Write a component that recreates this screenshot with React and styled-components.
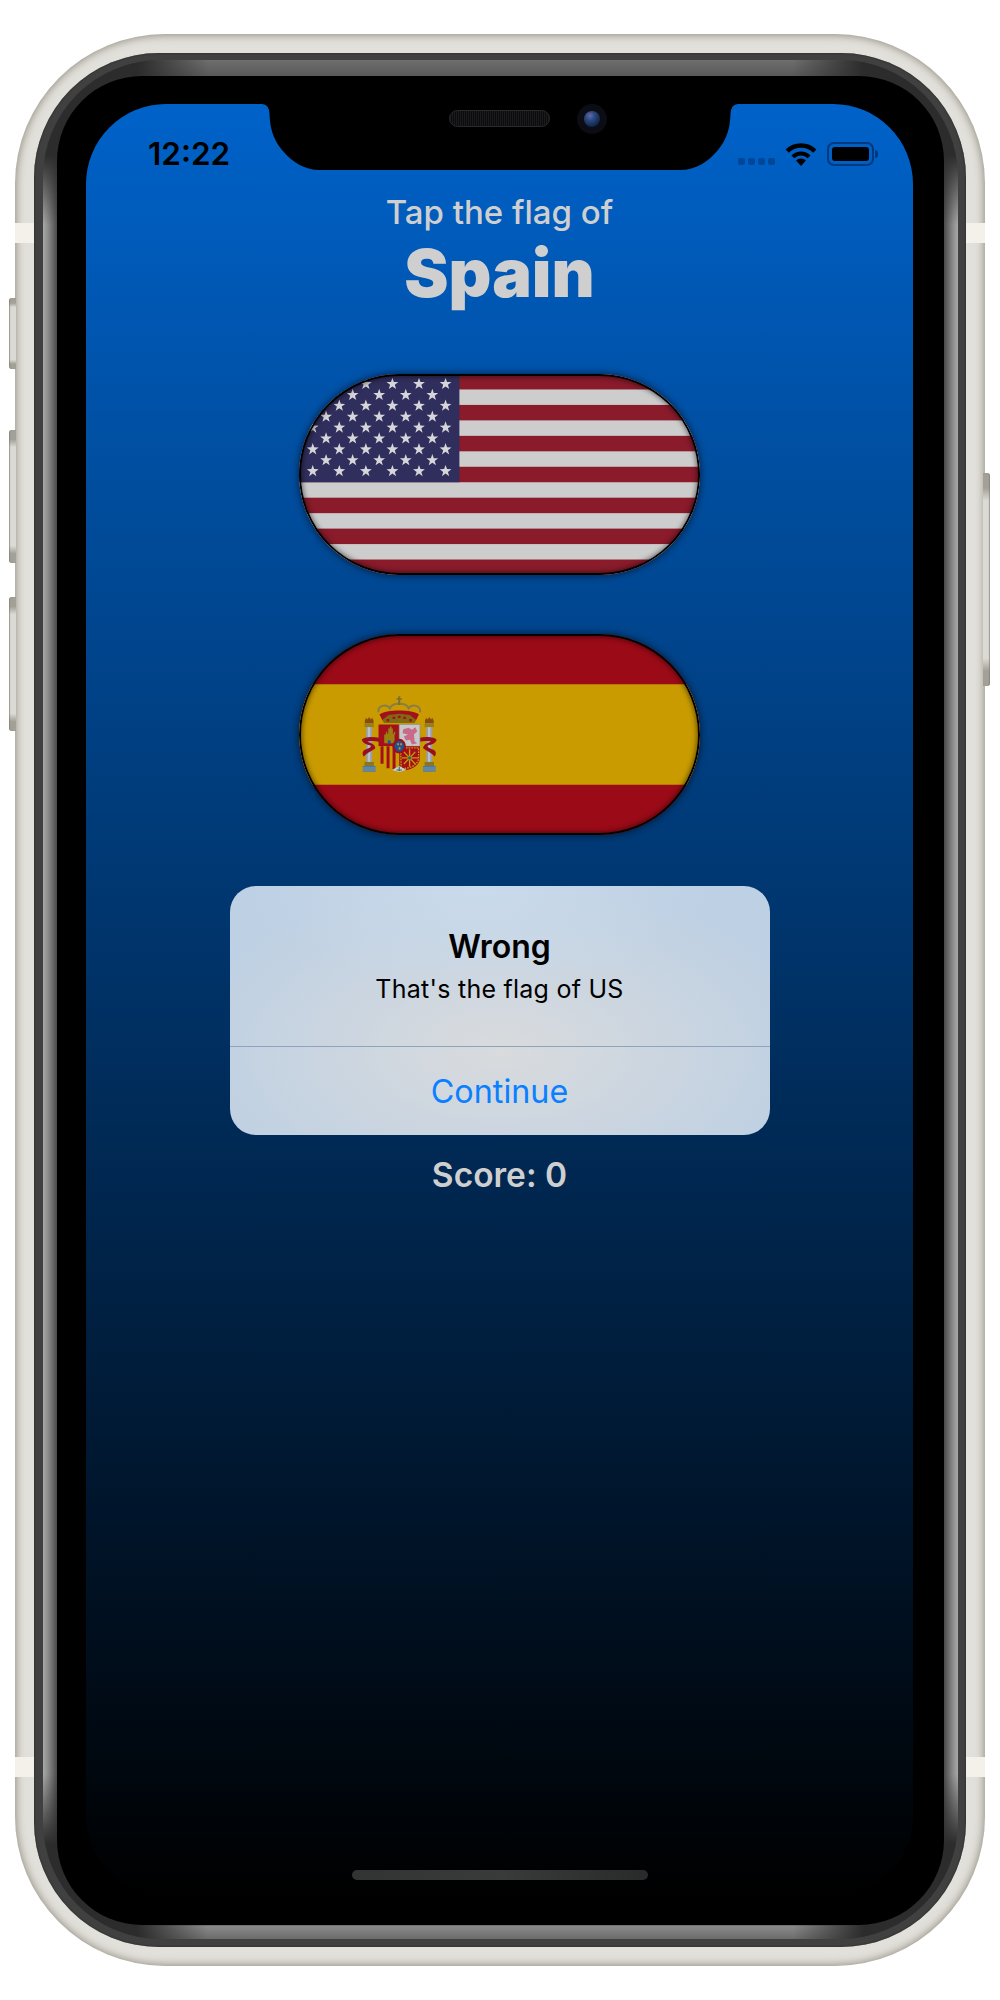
import styled, { createGlobalStyle } from 'styled-components';

const GlobalStyle = createGlobalStyle`
  html, body {
    margin: 0;
    padding: 0;
    background: #fff;
  }
  * {
    box-sizing: border-box;
  }
`;

const Page = styled.div`
  width: 1000px;
  height: 2000px;
  padding: 34px 15px;
  font-family: Inter, "Liberation Sans", sans-serif;
`;

const Phone = styled.div`
  position: relative;
  width: 970px;
  height: 1932px;
  padding: 19px;
  border-radius: 150px;
  background: #e2e0da;
  box-shadow: inset 0 0 9px 1px rgba(125, 120, 108, 0.8);
`;

const SideButton = styled.div`
  position: absolute;
  top: ${({ $top }) => $top}px;
  height: ${({ $height }) => $height}px;
  width: 7px;
  ${({ $right }) => ($right ? 'right: -5px;' : 'left: -6px;')}
  border-radius: ${({ $right }) => ($right ? '0 3px 3px 0' : '3px 0 0 3px')};
  background: linear-gradient(
    #a3a097 0,
    #a3a097 7%,
    #dcdad4 13%,
    #dcdad4 87%,
    #a3a097 93%,
    #a3a097 100%
  );
  box-shadow: inset ${({ $right }) => ($right ? '-1px' : '1px')} 0 1px rgba(130, 125, 115, 0.7);
`;

const AntennaBand = styled.div`
  position: absolute;
  top: ${({ $top }) => $top}px;
  ${({ $right }) => ($right ? 'right: 0;' : 'left: 0;')}
  width: 19px;
  height: 20px;
  background: #f3f1ea;
`;

const Bezel = styled.div`
  height: 100%;
  padding: 7px 8px 8px 9px;
  border-radius: 125px;
  background: #404040;
  box-shadow: inset 0 0 2px #1c1c1c;
`;

const Gloss = styled.div`
  height: 100%;
  padding: 16px 14px 14px;
  border-radius: 117px;
  background:
    radial-gradient(circle at 0 0, #2c2c2c 0, #2c2c2c 95px, transparent 165px) 0 0 / 170px 170px no-repeat,
    radial-gradient(circle at 100% 0, #2c2c2c 0, #2c2c2c 95px, transparent 165px) 100% 0 / 170px 170px no-repeat,
    radial-gradient(circle at 0 100%, #2c2c2c 0, #2c2c2c 95px, transparent 165px) 0 100% / 170px 170px no-repeat,
    radial-gradient(circle at 100% 100%, #2c2c2c 0, #2c2c2c 95px, transparent 165px) 100% 100% / 170px 170px no-repeat,
    linear-gradient(90deg, #a9a9a9 0, #8c8c8c 5px, #4a4a4a 14px, transparent 14px, transparent calc(100% - 14px), #4a4a4a calc(100% - 14px), #8c8c8c calc(100% - 5px), #a9a9a9 100%),
    linear-gradient(#6e6e6e, #585858 16px, #585858 calc(100% - 14px), #8a8a8a calc(100% - 13px), #6c6c6c);
`;

const Glass = styled.div`
  height: 100%;
  padding: 28px 29px;
  border-radius: 85px;
  background: #000;
`;

const Screen = styled.div`
  position: relative;
  width: 827px;
  height: 1792px;
  display: flex;
  flex-direction: column;
  align-items: center;
  border-radius: 80px;
  overflow: hidden;
  background: linear-gradient(#0062c9, #000);
`;

const NotchShape = styled.svg`
  position: absolute;
  top: 0;
  left: 172px;
  width: 484px;
  height: 67px;
`;

const Speaker = styled.div`
  position: absolute;
  top: 6px;
  left: 363px;
  width: 101px;
  height: 17px;
  border-radius: 9px;
  border: 1px solid #2a2a2e;
  background: repeating-linear-gradient(90deg, #1b1b1d 0, #1b1b1d 1px, #0c0c0d 1px, #0c0c0d 2px);
`;

const Camera = styled.div`
  position: absolute;
  top: 0;
  left: 491px;
  width: 30px;
  height: 30px;
  border-radius: 50%;
  background: #0c0c14;
  display: flex;
  align-items: center;
  justify-content: center;
  &::after {
    content: '';
    width: 16px;
    height: 16px;
    border-radius: 50%;
    background: radial-gradient(circle at 38% 30%, #6a66a8 0, #2a4a80 30%, #12284c 70%, #060a18 100%);
  }
`;

const StatusBar = styled.div`
  width: 100%;
  height: 66px;
  padding: 34px 39px 0 62px;
  display: flex;
  justify-content: space-between;
  align-items: flex-start;
`;

const Clock = styled.div`
  font-size: 31.5px;
  line-height: 32px;
  font-weight: 600;
  color: #000;
`;

const StatusIcons = styled.div`
  display: flex;
  align-items: flex-start;
  padding-top: 4px;
`;

const SignalDots = styled.div`
  display: flex;
  gap: 3px;
  margin: 16px 10px 0 0;
`;

const SignalDot = styled.span`
  width: 7px;
  height: 7px;
  border-radius: 2px;
  background: #00479a;
`;

const WifiIcon = styled.svg`
  width: 32px;
  height: 24px;
  margin-right: 10px;
`;

const Battery = styled.div`
  width: 47px;
  height: 24px;
  padding: 3px;
  border: 2px solid #00397f;
  border-radius: 7px;
  position: relative;
  &::before {
    content: '';
    display: block;
    height: 100%;
    border-radius: 3px;
    background: #000;
  }
  &::after {
    content: '';
    position: absolute;
    top: 6px;
    right: -6px;
    width: 3px;
    height: 8px;
    border-radius: 0 3px 3px 0;
    background: #00397f;
  }
`;

const Prompt = styled.div`
  margin-top: 23px;
  font-size: 33px;
  line-height: 38px;
  font-weight: 500;
  color: #cfcfcf;
`;

const Country = styled.div`
  margin-top: 4px;
  font-size: 66.5px;
  line-height: 76px;
  font-weight: 900;
  color: #cfcfcf;
`;

const FlagButton = styled.div`
  position: relative;
  width: 401px;
  height: 201px;
  margin-top: ${({ $first }) => ($first ? 63 : 59)}px;
  border-radius: 101px;
  overflow: hidden;
  background: #000;
  box-shadow: 0 0 6px 2px rgba(0, 0, 0, 0.4);
  &::after {
    content: '';
    position: absolute;
    inset: 0;
    border-radius: 101px;
    border: 2.5px solid #000;
    box-shadow: inset 0 0 5px 1px rgba(0, 0, 0, 0.5);
  }
  svg {
    display: block;
    width: 100%;
    height: 100%;
  }
`;

const Alert = styled.div`
  width: 540px;
  height: 249px;
  margin-top: 51px;
  border-radius: 26px;
  overflow: hidden;
  display: flex;
  flex-direction: column;
  background:
    radial-gradient(ellipse 230px 110px at 46% 0, rgba(204, 221, 238, 0.8) 0, rgba(204, 221, 238, 0) 100%),
    radial-gradient(ellipse 320px 170px at 50% 66%, #d9dbdd 0, rgba(217, 219, 221, 0) 100%),
    #bed0e3;
`;

const AlertBody = styled.div`
  height: 160px;
  padding-top: 41px;
  text-align: center;
  color: #000;
`;

const AlertTitle = styled.div`
  font-size: 32px;
  line-height: 40px;
  font-weight: 600;
`;

const AlertMessage = styled.div`
  margin-top: 6px;
  font-size: 25px;
  line-height: 32px;
  font-weight: 400;
  letter-spacing: 0.25px;
`;

const AlertAction = styled.div`
  flex: 1;
  display: flex;
  align-items: center;
  justify-content: center;
  border-top: 1px solid #8fa3bc;
  font-size: 32.3px;
  font-weight: 400;
  color: #0a7fff;
`;

const Score = styled.div`
  margin-top: 20px;
  font-size: 33.5px;
  line-height: 40px;
  font-weight: 600;
  color: #cfcfcf;
`;

const HomeBar = styled.div`
  width: 296px;
  height: 10px;
  margin-top: auto;
  margin-bottom: 16px;
  border-radius: 5px;
  background: linear-gradient(90deg, #333 0, #3a3a3a 50%, #2a2a2a 100%);
`;

const starPoints = (cx, cy, r) => {
  const pts = [];
  for (let i = 0; i < 10; i++) {
    const rad = i % 2 === 0 ? r : r * 0.4;
    const a = (Math.PI / 5) * i - Math.PI / 2;
    pts.push(`${(cx + rad * Math.cos(a)).toFixed(2)},${(cy + rad * Math.sin(a)).toFixed(2)}`);
  }
  return pts.join(' ');
};

const UsFlag = () => {
  const stars = [];
  for (let row = 0; row < 9; row++) {
    const count = row % 2 === 0 ? 6 : 5;
    for (let col = 0; col < count; col++) {
      const x = (row % 2 === 0 ? 13.7 : 27) + col * 26.5;
      stars.push(<polygon key={`${row}-${col}`} points={starPoints(x, 10 + row * 10.83, 6.2)} fill="#d6d6da" />);
    }
  }
  return (
    <svg viewBox="0 0 400 200" preserveAspectRatio="none">
      <rect width="400" height="200" fill="#cdcdcd" />
      {[0, 2, 4, 6, 8, 10, 12].map((i) => (
        <rect key={i} y={(i * 200) / 13} width="400" height={200 / 13} fill="#891b2b" />
      ))}
      <rect width="160" height="107.7" fill="#302e5c" />
      {stars}
    </svg>
  );
};

const SpainFlag = () => (
  <svg viewBox="0 0 400 200" preserveAspectRatio="none">
    <rect width="400" height="200" fill="#9b0a17" />
    <rect y="50" width="400" height="100" fill="#c99b00" />
    <g transform="translate(50 50) scale(0.3333)">
      {/* crown */}
      <path d="M88 84 C84 62 112 58 122 72 C128 54 172 54 178 72 C188 58 216 62 212 84" fill="none" stroke="#8a7d48" strokeWidth="6" />
      <path d="M150 36 V62" stroke="#7d7030" strokeWidth="6" />
      <path d="M142 44 H158" stroke="#7d7030" strokeWidth="4" />
      <path d="M91 90 C110 74 190 74 209 90 L200 108 H100 Z" fill="#a3101c" />
      <path d="M100 106 L118 92 L150 88 L182 92 L200 106 L196 116 H104 Z" fill="#7d6a12" />
      <path d="M112 104 h8 v7 h-8z M130 97 h8 v7 h-8z M146 94 h8 v7 h-8z M162 97 h8 v7 h-8z M180 104 h8 v7 h-8z" fill="#a3101c" />
      {/* pillars */}
      <path d="M47 108 l4 -8 l4 5 l5 -7 l5 7 l4 -5 l4 8 v8 H47 Z" fill="#8a4a10" />
      <rect x="46" y="116" width="28" height="12" fill="#9a7e18" />
      <rect x="51" y="128" width="18" height="106" fill="#9a9ea8" />
      <rect x="56" y="128" width="7" height="106" fill="#bcbfc6" />
      <rect x="46" y="232" width="28" height="12" fill="#8a7520" />
      <rect x="41" y="244" width="38" height="17" fill="#4a78a0" />
      <path d="M41 250 H79 M41 256 H79" stroke="#8fa8b8" strokeWidth="2" />
      <path d="M227 108 l4 -8 l4 5 l5 -7 l5 7 l4 -5 l4 8 v8 H227 Z" fill="#8a4a10" />
      <rect x="226" y="116" width="28" height="12" fill="#9a7e18" />
      <rect x="231" y="128" width="18" height="106" fill="#9a9ea8" />
      <rect x="236" y="128" width="7" height="106" fill="#bcbfc6" />
      <rect x="226" y="232" width="28" height="12" fill="#8a7520" />
      <rect x="221" y="244" width="38" height="17" fill="#4a78a0" />
      <path d="M221 250 H259 M221 256 H259" stroke="#8fa8b8" strokeWidth="2" />
      {/* ribbons */}
      <path d="M38 166 C40 158 70 154 90 160 L90 172 C72 168 60 170 54 172 C70 176 80 184 78 192 C66 200 52 206 44 216 C38 208 40 200 46 196 C56 192 66 188 66 184 C56 180 42 180 38 166 Z" fill="#98101c" />
      <path d="M262 166 C260 158 230 154 210 160 L210 172 C228 168 240 170 246 172 C230 176 220 184 222 192 C234 200 248 206 256 216 C262 208 260 200 254 196 C244 192 234 188 234 184 C244 180 258 180 262 166 Z" fill="#98101c" />
      {/* shield */}
      <path d="M88 120 H150 V185 H88 Z" fill="#a3101c" />
      <path d="M150 120 H212 V185 H150 Z" fill="#c8c8c8" stroke="#8f8f8f" strokeWidth="2" />
      <path d="M88 185 H150 V258 C118 258 88 240 88 205 Z" fill="#c99b00" />
      <path d="M94 185 h9 v52 h-9z M112 185 h9 v66 h-9z M130 185 h9 v70 h-9z" fill="#a3101c" />
      <path d="M150 185 H212 V218 C212 245 185 258 150 258 Z" fill="#a3101c" />
      <path d="M154 190 H208 V218 C208 240 184 252 156 252 Z" fill="none" stroke="#c99b00" strokeWidth="4" strokeDasharray="5 3" />
      <path d="M181 194 V246 M158 220 H206 M164 202 L198 238 M198 202 L164 238" stroke="#c99b00" strokeWidth="4" />
      <circle cx="181" cy="220" r="5" fill="#1f6f70" />
      {/* castle */}
      <path d="M105 176 V150 H110 V142 H114 V148 H117 V132 H122 V126 H127 V132 H131 V148 H134 V142 H138 V150 H136 V176 Z" fill="#9a7f10" />
      <rect x="116" y="168" width="8" height="10" fill="#1e4f9a" />
      {/* lion */}
      <path d="M162 134 L178 130 L188 136 L198 128 L204 140 L194 150 L196 170 L204 176 L188 180 L182 166 L170 168 L164 156 L176 150 L160 146 Z" fill="#c86a88" />
      {/* inescutcheon */}
      <ellipse cx="150" cy="185" rx="20" ry="22" fill="#98101c" />
      <ellipse cx="150" cy="185" rx="14" ry="16" fill="#1e4f9a" />
      <path d="M144 176 h5 v6 h-5z M153 176 h5 v6 h-5z M148.500 188 h5 v7 h-5z" fill="#c99b00" />
      <path d="M128 256 L150 262 L172 256 L150 244 Z" fill="#c8cdd0" />
      <path d="M150 246 V260 M142 256 H158" stroke="#2f6b55" strokeWidth="3" />
    </g>
  </svg>
);

const App = () => (
  <>
    <GlobalStyle />
    <Page>
      <Phone>
        <SideButton $top={264} $height={71} />
        <SideButton $top={396} $height={133} />
        <SideButton $top={563} $height={134} />
        <SideButton $right $top={439} $height={213} />
        <AntennaBand $top={189} />
        <AntennaBand $right $top={189} />
        <AntennaBand $top={1723} />
        <AntennaBand $right $top={1723} />
        <Bezel>
          <Gloss>
            <Glass>
              <Screen>
                <NotchShape viewBox="0 0 484 67">
                  <path
                    d="M0 0 H4 Q11 0 11.500 10 C12 22 14 34 24 46 C34 58 46 66 62 66 H422 C438 66 450 58 460 46 C470 34 472 22 472.500 10 Q473 0 480 0 H484 V-1 H0 Z"
                    fill="#000"
                  />
                </NotchShape>
                <Speaker />
                <Camera />
                <StatusBar>
                  <Clock>12:22</Clock>
                  <StatusIcons>
                    <SignalDots>
                      <SignalDot />
                      <SignalDot />
                      <SignalDot />
                      <SignalDot />
                    </SignalDots>
                    <WifiIcon viewBox="0 0 32 24">
                      <path d="M2.200 9.200 A19.500 19.500 0 0 1 29.800 9.200" fill="none" stroke="#000" strokeWidth="4.500" />
                      <path d="M7.900 14.900 A11.500 11.500 0 0 1 24.100 14.900" fill="none" stroke="#000" strokeWidth="4" />
                      <path d="M16 24 L11 18.500 A7 7 0 0 1 21 18.500 Z" fill="#000" />
                    </WifiIcon>
                    <Battery />
                  </StatusIcons>
                </StatusBar>
                <Prompt>Tap the flag of</Prompt>
                <Country>Spain</Country>
                <FlagButton $first>
                  <UsFlag />
                </FlagButton>
                <FlagButton>
                  <SpainFlag />
                </FlagButton>
                <Alert>
                  <AlertBody>
                    <AlertTitle>Wrong</AlertTitle>
                    <AlertMessage>That's the flag of US</AlertMessage>
                  </AlertBody>
                  <AlertAction>Continue</AlertAction>
                </Alert>
                <Score>Score: 0</Score>
                <HomeBar />
              </Screen>
            </Glass>
          </Gloss>
        </Bezel>
      </Phone>
    </Page>
  </>
);

export default App;
